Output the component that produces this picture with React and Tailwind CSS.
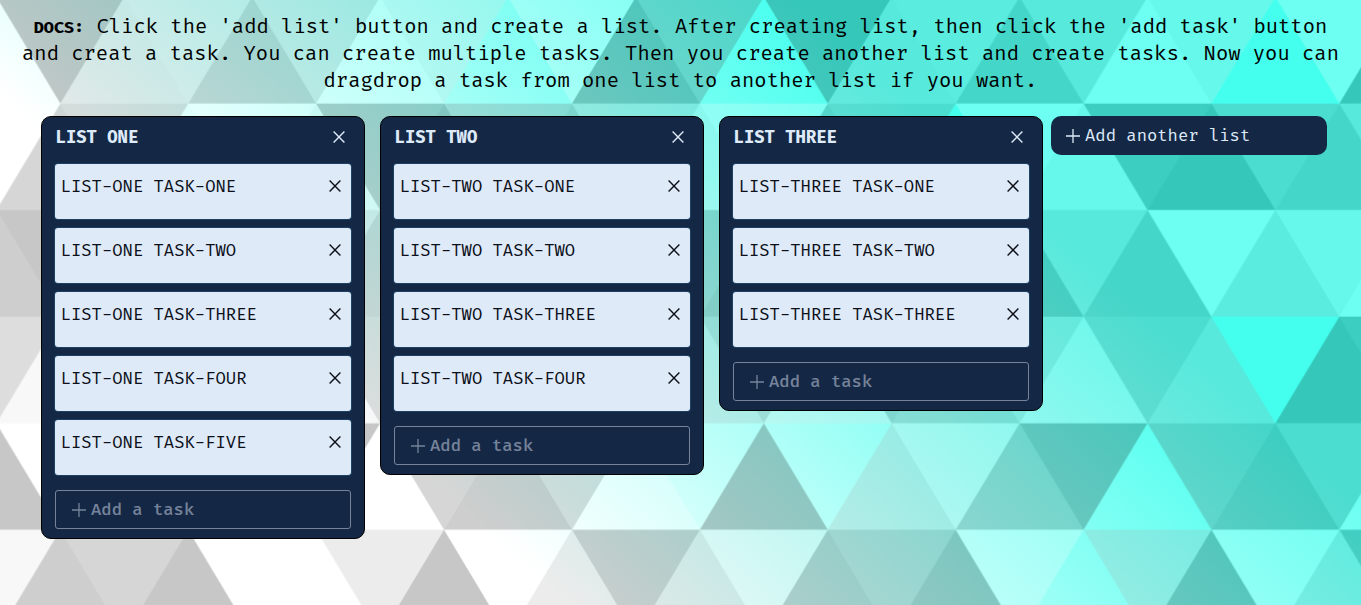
// [fill, points] of the repeating triangle tile, 1080 x 900 units
const TRIANGLES = [
  ["#000", "90 150 180 0 0 0"],
  ["#AAA", "270 150 360 0 180 0"],
  ["#999", "450 150 540 0 360 0"],
  ["#DDD", "630 150 720 0 540 0"],
  ["#FFF", "810 150 900 0 720 0"],
  ["#444", "990 150 1080 0 900 0"],
  ["#444", "90 150 0 300 180 300"],
  ["#DDD", "450 150 360 300 540 300"],
  ["#000", "630 150 540 300 720 300"],
  ["#444", "810 150 720 300 900 300"],
  ["#DDD", "990 150 900 300 1080 300"],
  ["#000", "90 450 180 300 0 300"],
  ["#AAA", "270 450 360 300 180 300"],
  ["#999", "450 450 540 300 360 300"],
  ["#FFF", "630 450 720 300 540 300"],
  ["#DDD", "810 450 900 300 720 300"],
  ["#444", "990 450 1080 300 900 300"],
  ["#DDD", "90 450 0 600 180 600"],
  ["#666", "270 450 180 600 360 600"],
  ["#DDD", "450 450 360 600 540 600"],
  ["#999", "630 450 540 600 720 600"],
  ["#000", "810 450 720 600 900 600"],
  ["#AAA", "990 450 900 600 1080 600"],
  ["#DDD", "270 750 360 600 180 600"],
  ["#000", "450 750 540 600 360 600"],
  ["#444", "630 750 720 600 540 600"],
  ["#666", "810 750 900 600 720 600"],
  ["#222", "90 750 0 900 180 900"],
  ["#000", "270 750 180 900 360 900"],
  ["#000", "630 750 540 900 720 900"],
  ["#AAA", "810 750 720 900 900 900"],
  ["#999", "990 750 900 900 1080 900"],
  ["#999", "180 0 90 150 270 150"],
  ["#444", "360 0 270 150 450 150"],
  ["#FFF", "540 0 450 150 630 150"],
  ["#000", "900 0 810 150 990 150"],
  ["#222", "0 300 -90 450 90 450"],
  ["#FFF", "0 300 90 150 -90 150"],
  ["#FFF", "180 300 90 450 270 450"],
  ["#666", "180 300 270 150 90 150"],
  ["#222", "360 300 270 450 450 450"],
  ["#FFF", "360 300 450 150 270 150"],
  ["#444", "540 300 450 450 630 450"],
  ["#222", "540 300 630 150 450 150"],
  ["#AAA", "720 300 630 450 810 450"],
  ["#666", "720 300 810 150 630 150"],
  ["#FFF", "900 300 810 450 990 450"],
  ["#999", "900 300 990 150 810 150"],
  ["#000", "0 600 -90 750 90 750"],
  ["#666", "0 600 90 450 -90 450"],
  ["#AAA", "180 600 90 750 270 750"],
  ["#444", "180 600 270 450 90 450"],
  ["#444", "360 600 270 750 450 750"],
  ["#999", "360 600 450 450 270 450"],
  ["#666", "540 600 630 450 450 450"],
  ["#222", "720 600 630 750 810 750"],
  ["#FFF", "900 600 810 750 990 750"],
  ["#222", "900 600 990 450 810 450"],
  ["#DDD", "0 900 90 750 -90 750"],
  ["#444", "180 900 270 750 90 750"],
  ["#FFF", "360 900 450 750 270 750"],
  ["#AAA", "540 900 630 750 450 750"],
  ["#FFF", "720 900 810 750 630 750"],
  ["#222", "900 900 990 750 810 750"],
  ["#222", "1080 300 990 450 1170 450"],
  ["#FFF", "1080 300 1170 150 990 150"],
  ["#000", "1080 600 990 750 1170 750"],
  ["#666", "1080 600 1170 450 990 450"],
  ["#DDD", "1080 900 1170 750 990 750"],
];

const LISTS = [
  {
    title: "LIST ONE",
    tasks: ["LIST-ONE TASK-ONE", "LIST-ONE TASK-TWO", "LIST-ONE TASK-THREE", "LIST-ONE TASK-FOUR", "LIST-ONE TASK-FIVE"],
  },
  {
    title: "LIST TWO",
    tasks: ["LIST-TWO TASK-ONE", "LIST-TWO TASK-TWO", "LIST-TWO TASK-THREE", "LIST-TWO TASK-FOUR"],
  },
  {
    title: "LIST THREE",
    tasks: ["LIST-THREE TASK-ONE", "LIST-THREE TASK-TWO", "LIST-THREE TASK-THREE"],
  },
];

function Backdrop() {
  return (
    <svg className="absolute inset-0 h-full w-full" aria-hidden="true">
      <defs>
        <linearGradient id="sea" gradientUnits="userSpaceOnUse" x1="0" x2="0" y1="0" y2="605" gradientTransform="rotate(222,683,302)">
          <stop offset="0" stopColor="#ffffff" />
          <stop offset="1" stopColor="#44ffee" />
        </linearGradient>
        <pattern id="tile" patternUnits="userSpaceOnUse" x="-3.6" y="-3.1" width="767.4" height="639.5" viewBox="0 0 1080 900">
          <g fillOpacity="0.22">
            {TRIANGLES.map(([fill, points]) => (
              <polygon key={points} fill={fill} points={points} />
            ))}
          </g>
        </pattern>
      </defs>
      <rect width="100%" height="100%" fill="url(#sea)" />
      <rect width="100%" height="100%" fill="url(#tile)" />
    </svg>
  );
}

function Cross() {
  return (
    <svg className="size-3 shrink-0" viewBox="0 0 12 12" fill="none" stroke="currentColor" strokeWidth="1.4">
      <path d="M0.6 0.6 11.4 11.4M11.4 0.6 0.6 11.4" />
    </svg>
  );
}

function Plus() {
  return (
    <svg className="size-3.5 shrink-0" viewBox="0 0 14 14" fill="none" stroke="currentColor" strokeWidth="1.3">
      <path d="M7 0V14M0 7H14" />
    </svg>
  );
}

function List({ title, tasks }) {
  return (
    <section className="w-[324px] shrink-0 rounded-[10px] border border-black bg-[#142846] px-[13px] pb-[9px]">
      <header className="flex h-[47px] items-center justify-between pr-[6px] pb-[7px] pl-[0.6px] text-[#dfeaf8]">
        <h2 className="pt-1 text-[16.8px] font-bold">{title}</h2>
        <Cross />
      </header>
      <div className="flex flex-col gap-[9px]">
        {tasks.map((task) => (
          <div
            key={task}
            className="flex h-[55px] items-start justify-between rounded-[3px] bg-[#dfeaf8] pt-4 pr-[10px] pl-[5.6px] text-[#0b0f18] shadow-[0_0_0_1px_#1c4263]"
          >
            <span className="text-[16.8px] leading-[14px]">{task}</span>
            <Cross />
          </div>
        ))}
      </div>
      <button className="mt-[15px] flex h-[39px] w-full items-center gap-[5px] rounded-[3px] border border-[#76839a] pl-4 text-[16.8px] font-medium text-[#76839a]">
        <Plus />
        <span className="pt-0.5">Add a task</span>
      </button>
    </section>
  );
}

export default function App() {
  return (
    <main className="relative h-[605px] w-[1361px] overflow-hidden font-['Fira_Code','Fira_Mono','DejaVu_Sans_Mono',monospace]">
      <Backdrop />
      <div className="relative">
        <p className="h-[116px] pt-[14px] text-center text-[20px] leading-[27px] text-black">
          <b className="text-[16.4px] leading-none">DOCS:</b> Click the 'add list' button and create a list. After creating list, then click the 'add task' button
          <br />
          and creat a task. You can create multiple tasks. Then you create another list and create tasks. Now you can
          <br />
          dragdrop a task from one list to another list if you want.
        </p>
        <div className="flex items-start pl-[41px]">
          <div className="flex items-start gap-[15px]">
            {LISTS.map((list) => (
              <List key={list.title} {...list} />
            ))}
          </div>
          <button className="ml-2 flex h-[39px] w-[276px] items-center gap-[5px] rounded-[10px] bg-[#142846] pl-[15px] text-[16.8px] text-[#dfeaf8]">
            <Plus />
            <span className="pt-0.5">Add another list</span>
          </button>
        </div>
      </div>
    </main>
  );
}
